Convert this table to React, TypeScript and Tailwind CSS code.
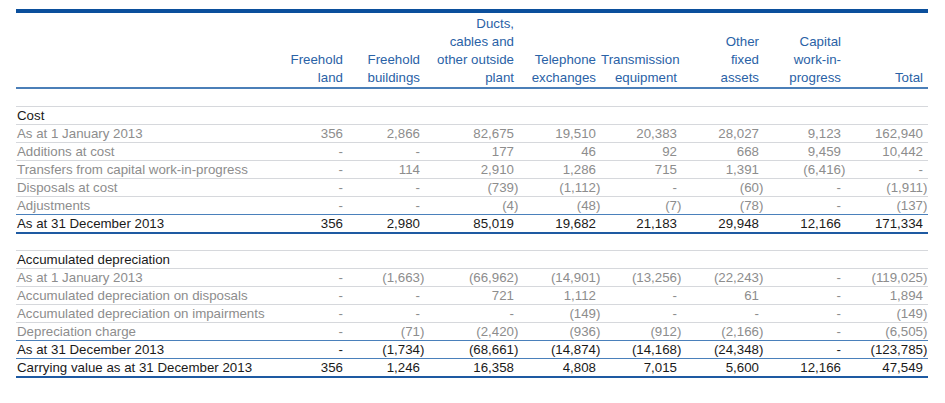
import React from "react";

type Row = {
  label: string;
  values?: string[];
  kind: "head" | "detail" | "total";
  line: "grey" | "blue" | "thick";
  top?: boolean;
};

const headers: string[][] = [
  ["Freehold", "land"],
  ["Freehold", "buildings"],
  ["Ducts,", "cables and", "other outside", "plant"],
  ["Telephone", "exchanges"],
  ["Transmission", "equipment"],
  ["Other", "fixed", "assets"],
  ["Capital", "work-in-", "progress"],
  ["Total"],
];

const costRows: Row[] = [
  { label: "Cost", kind: "head", line: "grey", top: true },
  {
    label: "As at 1 January 2013",
    values: ["356", "2,866", "82,675", "19,510", "20,383", "28,027", "9,123", "162,940"],
    kind: "detail",
    line: "grey",
  },
  {
    label: "Additions at cost",
    values: ["-", "-", "177", "46", "92", "668", "9,459", "10,442"],
    kind: "detail",
    line: "grey",
  },
  {
    label: "Transfers from capital work-in-progress",
    values: ["-", "114", "2,910", "1,286", "715", "1,391", "(6,416)", "-"],
    kind: "detail",
    line: "grey",
  },
  {
    label: "Disposals at cost",
    values: ["-", "-", "(739)", "(1,112)", "-", "(60)", "-", "(1,911)"],
    kind: "detail",
    line: "grey",
  },
  {
    label: "Adjustments",
    values: ["-", "-", "(4)", "(48)", "(7)", "(78)", "-", "(137)"],
    kind: "detail",
    line: "blue",
  },
  {
    label: "As at 31 December 2013",
    values: ["356", "2,980", "85,019", "19,682", "21,183", "29,948", "12,166", "171,334"],
    kind: "total",
    line: "thick",
  },
];

const depRows: Row[] = [
  { label: "Accumulated depreciation", kind: "head", line: "grey", top: true },
  {
    label: "As at 1 January 2013",
    values: ["-", "(1,663)", "(66,962)", "(14,901)", "(13,256)", "(22,243)", "-", "(119,025)"],
    kind: "detail",
    line: "grey",
  },
  {
    label: "Accumulated depreciation on disposals",
    values: ["-", "-", "721", "1,112", "-", "61", "-", "1,894"],
    kind: "detail",
    line: "grey",
  },
  {
    label: "Accumulated depreciation on impairments",
    values: ["-", "-", "-", "(149)", "-", "-", "-", "(149)"],
    kind: "detail",
    line: "grey",
  },
  {
    label: "Depreciation charge",
    values: ["-", "(71)", "(2,420)", "(936)", "(912)", "(2,166)", "-", "(6,505)"],
    kind: "detail",
    line: "blue",
  },
  {
    label: "As at 31 December 2013",
    values: ["-", "(1,734)", "(68,661)", "(14,874)", "(14,168)", "(24,348)", "-", "(123,785)"],
    kind: "total",
    line: "blue",
  },
  {
    label: "Carrying value as at 31 December 2013",
    values: ["356", "1,246", "16,358", "4,808", "7,015", "5,600", "12,166", "47,549"],
    kind: "total",
    line: "thick",
  },
];

const grid = "grid grid-cols-[252px_80px_77px_94px_82px_81px_82px_82px_82px]";

// negative figures hang their closing bracket past the column edge
const Figure: React.FC<{ value: string }> = ({ value }) => {
  if (value.startsWith("(")) {
    return (
      <span>
        {value.slice(0, -1)}
        <span className="inline-block w-0">)</span>
      </span>
    );
  }
  return <span>{value}</span>;
};

const TableRow: React.FC<{ row: Row }> = ({ row }) => {
  const lineClass =
    row.line === "thick"
      ? "h-[19px] border-b-2 border-[#1e5aa2]"
      : row.line === "blue"
      ? "h-[18px] border-b border-[#4a80bb]"
      : "h-[18px] border-b border-[#d6d8dc]";
  const topClass = row.top ? "border-t border-t-[#d6d8dc] h-[19px]" : "";
  const textClass = row.kind === "detail" ? "text-[#8d8d8d]" : "text-[#1a1a1a]";

  return (
    <div className={`${grid} ${lineClass} ${topClass} ${textClass} leading-[17px]`}>
      <div className="pl-[1px] whitespace-nowrap">{row.label}</div>
      {row.values
        ? row.values.map((v, i) => (
            <div key={i} className="text-right pr-[5px] whitespace-nowrap">
              <Figure value={v} />
            </div>
          ))
        : headers.map((_, i) => <div key={i} />)}
    </div>
  );
};

const App: React.FC = () => {
  return (
    <div className="w-[945px] h-[403px] bg-white font-[Liberation_Sans,Arial,sans-serif] text-[13.3px] overflow-hidden">
      <div className="ml-[16px] w-[912px]">
        <div className="mt-[9px] h-[4px] bg-[#0b4f9c]" />

        <div className={`${grid} border-b-2 border-[#4b7fb8] pt-[2px] text-[#2a62a6] leading-[18px]`}>
          <div />
          {headers.map((lines, i) => (
            <div key={i} className="flex flex-col justify-end text-right pr-[5px] whitespace-nowrap">
              {lines.map((l) => (
                <span key={l}>{l}</span>
              ))}
            </div>
          ))}
        </div>

        <div className="h-[17px]" />
        {costRows.map((r) => (
          <TableRow key={"c" + r.label} row={r} />
        ))}

        <div className="h-[16px]" />
        {depRows.map((r) => (
          <TableRow key={"d" + r.label} row={r} />
        ))}
      </div>
    </div>
  );
};

export default App;
